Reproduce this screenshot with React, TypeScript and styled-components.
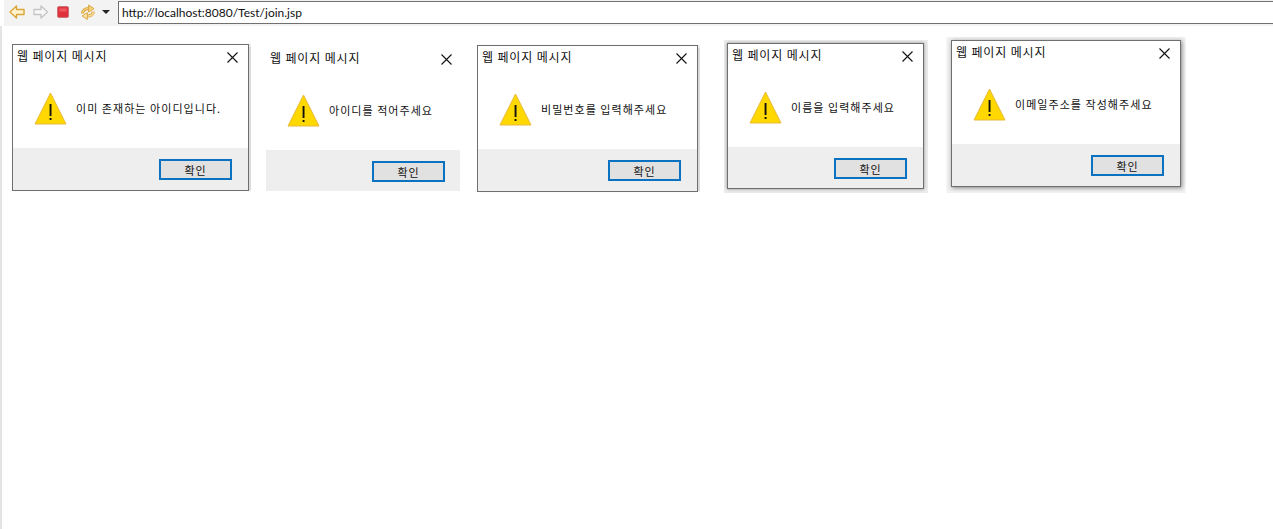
import React from 'react';
import styled, { createGlobalStyle } from 'styled-components';

const GlobalStyle = createGlobalStyle`
  html, body {
    margin: 0;
    padding: 0;
    height: 100%;
    background: #fff;
  }
  #root {
    height: 100%;
  }
`;

const KO_FONT = `"Noto Sans CJK KR", "Noto Sans", sans-serif`;

const Page = styled.div`
  width: 1273px;
  height: 529px;
  overflow: hidden;
  display: flex;
  flex-direction: column;
  background: #fff;
`;

const Toolbar = styled.div`
  height: 26px;
  flex: none;
  display: flex;
  align-items: flex-start;
  background: #f3f3f3;
  margin-left: 4px;
  box-sizing: border-box;
`;

const ToolIcons = styled.div`
  width: 114px;
  height: 24px;
  flex: none;
  display: flex;
  align-items: center;
  padding-left: 5px;
  box-sizing: border-box;
`;

const ToolIcon = styled.svg<{ $gap: number }>`
  flex: none;
  display: block;
  margin-right: ${(p) => p.$gap}px;
`;

const AddressBar = styled.div`
  flex: 1;
  height: 23px;
  margin-top: 1px;
  padding-left: 3px;
  box-sizing: border-box;
  border: 1px solid #707070;
  border-right: none;
  background: #fff;
  color: #111;
  font: 12px/21px "Lato", "Noto Sans", sans-serif;
`;

const Canvas = styled.div`
  position: relative;
  flex: 1;
  box-shadow: inset 2px 0 0 #e4e4e4;
`;

type Frame = 'none' | 'flat' | 'halo' | 'soft';

const frameShadow: Record<Frame, string> = {
  none: 'none',
  flat: '1.5px 0 1px rgba(0, 0, 0, 0.14)',
  halo: '0 0 3px rgba(0, 0, 0, 0.4), 0.5px 0.5px 0 3.5px #ebebeb',
  soft: '1px 1px 4px rgba(0, 0, 0, 0.45), 0 1.5px 0 4.5px #f0f0f0',
};

const Dialog = styled.div<{ $x: number; $y: number; $w: number; $h: number; $frame: Frame }>`
  position: absolute;
  left: ${(p) => p.$x}px;
  top: ${(p) => p.$y - 26}px;
  width: ${(p) => p.$w}px;
  height: ${(p) => p.$h}px;
  box-sizing: border-box;
  display: flex;
  flex-direction: column;
  background: #fff;
  border: ${(p) => (p.$frame === 'none' ? '0' : '1px solid #6f6f6f')};
  border-top: 1px solid ${(p) => (p.$frame === 'none' ? 'transparent' : '#6f6f6f')};
  box-shadow: ${(p) => frameShadow[p.$frame]};
  font-family: ${KO_FONT};
  color: #111;
`;

const TitleBar = styled.div<{ $cropped: boolean }>`
  height: 24px;
  flex: none;
  display: flex;
  align-items: center;
  justify-content: space-between;
  padding: 0 ${(p) => (p.$cropped ? 8 : 10)}px 0 4px;
`;

const Title = styled.span`
  font-size: 12px;
  letter-spacing: 0.85px;
  line-height: 22px;
  margin-bottom: 2px;
  white-space: nowrap;
`;

const CloseIcon = styled.svg`
  display: block;
  flex: none;
`;

const Body = styled.div`
  height: 79px;
  flex: none;
  display: flex;
  align-items: flex-start;
  padding: 23px 0 0 21px;
  box-sizing: border-box;
  gap: 9px;
`;

const WarnIcon = styled.svg`
  display: block;
  flex: none;
`;

const Message = styled.span`
  font-size: 11px;
  letter-spacing: 1.05px;
  line-height: 18px;
  margin-top: 7px;
  white-space: nowrap;
`;

const Footer = styled.div<{ $cropped: boolean }>`
  flex: 1;
  box-sizing: border-box;
  display: flex;
  justify-content: flex-end;
  align-items: flex-start;
  padding: 11px ${(p) => (p.$cropped ? 15 : 16)}px 0 0;
  background: #eeeeee;
`;

const OkButton = styled.button`
  width: 73px;
  height: 21px;
  box-sizing: border-box;
  padding: 0;
  border: 2px solid #0a72c0;
  background: #e1e1e1;
  color: #111;
  font-family: ${KO_FONT};
  font-size: 11px;
  letter-spacing: 1px;
  line-height: 16px;
`;

function Warning() {
  return (
    <WarnIcon width="33" height="33" viewBox="0 0 33 33">
      <path d="M16.5 1 L32 32 L1 32 Z" fill="#ffd800" stroke="#e8b93a" strokeWidth="1" strokeLinejoin="round" />
      <rect x="15.6" y="12" width="1.9" height="12" fill="#111" />
      <rect x="15.6" y="26" width="1.9" height="2" fill="#111" />
    </WarnIcon>
  );
}

function Close() {
  return (
    <CloseIcon width="11" height="11" viewBox="0 0 11 11">
      <path d="M0.5 0.5 L10.5 10.5 M10.5 0.5 L0.5 10.5" stroke="#111" strokeWidth="1.1" fill="none" />
    </CloseIcon>
  );
}

const dialogs: { x: number; y: number; w: number; h: number; frame: Frame; text: string }[] = [
  { x: 12, y: 44, w: 237, h: 147, frame: 'flat', text: '이미 존재하는 아이디입니다.' },
  { x: 266, y: 46, w: 194, h: 145, frame: 'none', text: '아이디를 적어주세요' },
  { x: 477, y: 45, w: 221, h: 147, frame: 'flat', text: '비밀번호를 입력해주세요' },
  { x: 727, y: 43, w: 197, h: 146, frame: 'halo', text: '이름을 입력해주세요' },
  { x: 951, y: 40, w: 230, h: 147, frame: 'soft', text: '이메일주소를 작성해주세요' },
];

export default function App() {
  return (
    <Page>
      <GlobalStyle />
      <Toolbar>
        <ToolIcons>
          <ToolIcon $gap={8} width="16" height="14" viewBox="0 0 16 14">
            <path d="M7.5 1 L1 7 L7.5 13 V9.5 H15 V4.5 H7.5 Z" fill="#fff4d0" stroke="#dca53a" strokeWidth="1.4" strokeLinejoin="round" />
          </ToolIcon>
          <ToolIcon $gap={9} width="15" height="14" viewBox="0 0 15 14">
            <path d="M8 1 L14.5 7 L8 13 V9.5 H1 V4.5 H8 Z" fill="#f8f8f8" stroke="#c4c4c4" strokeWidth="1.3" strokeLinejoin="round" />
          </ToolIcon>
          <ToolIcon $gap={11} width="12" height="12" viewBox="0 0 12 12">
            <rect x="0.5" y="0.5" width="11" height="11" rx="1.5" fill="#e0323c" stroke="#c9737a" />
            <rect x="2.5" y="2.5" width="7" height="3" fill="#ee5a62" />
          </ToolIcon>
          <ToolIcon $gap={6} width="16" height="16" viewBox="0 0 16 16">
            <g fill="none" strokeLinecap="butt">
              <path d="M2.6 9.5 C2.6 6.6 5 4.6 8.6 4.6" stroke="#d8a23c" strokeWidth="3.2" />
              <path d="M2.6 9.5 C2.6 6.6 5 4.6 8.6 4.6" stroke="#f6d27a" strokeWidth="1.4" />
              <path d="M13.2 7.4 C13.2 10.2 10.8 12 7.4 12" stroke="#d8a23c" strokeWidth="3.2" />
              <path d="M13.2 7.4 C13.2 10.2 10.8 12 7.4 12" stroke="#fae3a6" strokeWidth="1.4" />
            </g>
            <path d="M8.6 1 L14 4.6 L8.6 8.2 Z" fill="#f6d27a" stroke="#d8a23c" strokeWidth="0.9" strokeLinejoin="round" />
            <path d="M7.4 8.6 L2 12 L7.4 15.4 Z" fill="#fae3a6" stroke="#d8a23c" strokeWidth="0.9" strokeLinejoin="round" />
          </ToolIcon>
          <ToolIcon $gap={0} width="8" height="4" viewBox="0 0 8 4">
            <path d="M0 0 H8 L4 4 Z" fill="#222" />
          </ToolIcon>
        </ToolIcons>
        <AddressBar>http://localhost:8080/Test/join.jsp</AddressBar>
      </Toolbar>
      <Canvas>
        {dialogs.map((d) => {
          const cropped = d.frame === 'none';
          return (
            <Dialog key={d.text} $x={d.x} $y={d.y} $w={d.w} $h={d.h} $frame={d.frame}>
              <TitleBar $cropped={cropped}>
                <Title>웹 페이지 메시지</Title>
                <Close />
              </TitleBar>
              <Body>
                <Warning />
                <Message>{d.text}</Message>
              </Body>
              <Footer $cropped={cropped}>
                <OkButton>확인</OkButton>
              </Footer>
            </Dialog>
          );
        })}
      </Canvas>
    </Page>
  );
}
